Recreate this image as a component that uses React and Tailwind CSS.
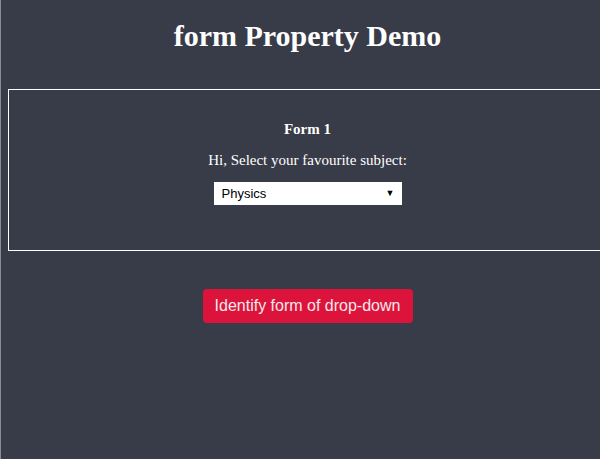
export default function App() {
  return (
    <div className="w-[600px] h-[459px] overflow-hidden bg-[#383b48] border-l border-[#8a8d96]">
      <div className="w-[614px] pl-[7px] pr-2 flex flex-col items-center">
        <h1 className="mt-[16px] h-[40px] leading-[40px] text-[30px] font-bold text-white font-['Liberation_Serif',serif]">
          form Property Demo
        </h1>
        <div className="mt-[33px] w-full h-[162px] border border-white flex flex-col items-center pt-[30px]">
          <div className="text-[15px] leading-[18px] font-bold text-white font-['Liberation_Serif',serif]">Form 1</div>
          <div className="mt-[13px] text-[15px] leading-[18px] text-white font-['Liberation_Serif',serif]">
            Hi, Select your favourite subject:
          </div>
          <div className="mt-[13px] w-[188px] h-[23px] bg-white flex items-center justify-between pl-[8px] pr-[7px] font-['Liberation_Sans',sans-serif]">
            <span className="text-[13px] text-black">Physics</span>
            <span className="text-[9px] text-black leading-none">▼</span>
          </div>
        </div>
        <button className="mt-[38px] w-[210px] h-[34px] rounded-[4px] bg-[#dc143c] text-[#f4e8ec] text-[16px] font-['Liberation_Sans',sans-serif]">
          Identify form of drop-down
        </button>
      </div>
    </div>
  );
}
